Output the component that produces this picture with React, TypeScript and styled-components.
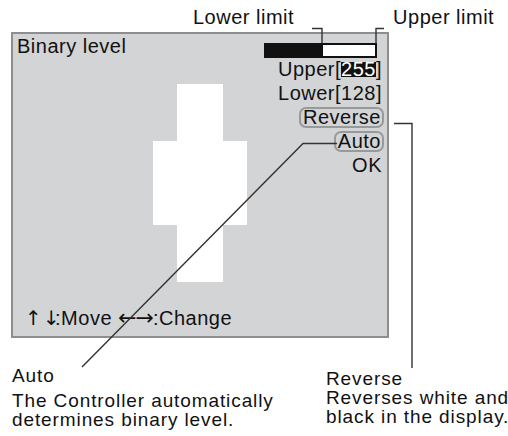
import React from 'react';
import styled, { createGlobalStyle } from 'styled-components';

const GlobalStyle = createGlobalStyle`
  html, body {
    margin: 0;
    padding: 0;
    background: #ffffff;
  }
`;

const Page = styled.div`
  position: relative;
  width: 508px;
  height: 436px;
  overflow: hidden;
  background: #ffffff;
  color: #111111;
  font-family: 'Liberation Sans', Arial, sans-serif;
  font-size: 20px;
  letter-spacing: 0.5px;
`;

const TopRow = styled.div`
  display: flex;
  height: 32px;
  box-sizing: border-box;
  padding: 6px 0 0 193px;
  gap: 99px;
  line-height: 23px;
  white-space: nowrap;
`;

const Label = styled.span`
  display: block;
`;

const Screen = styled.div`
  margin-left: 11px;
  width: 378px;
  height: 306px;
  box-sizing: border-box;
  border: 2px solid #8d8e90;
  background: #d3d4d6;
  display: flex;
  flex-direction: column;
  padding: 0 5px 6px 4px;
`;

const TitleRow = styled.div`
  display: flex;
  justify-content: space-between;
  align-items: flex-start;
  height: 23px;
`;

const Title = styled.div`
  line-height: 23px;
  padding-top: 1px;
`;

const LevelBar = styled.div`
  display: flex;
  width: 113px;
  height: 15px;
  margin: 9px 5px 0 0;
`;

const BarFill = styled.div`
  width: 58px;
  background: #111111;
`;

const BarRest = styled.div`
  flex: 1;
  box-sizing: border-box;
  border: 2px solid #111111;
  border-left-width: 1px;
  background: #ffffff;
`;

const Body = styled.div`
  flex: 1;
  display: grid;
  grid-template-columns: 1fr 94px 1fr;
`;

const Shape = styled.div`
  grid-column: 2;
  margin-top: 27px;
  display: flex;
  flex-direction: column;
  align-items: center;
  align-self: start;
`;

const Block = styled.div<{ $w: number; $h: number }>`
  width: ${p => p.$w}px;
  height: ${p => p.$h}px;
  background: #ffffff;
`;

const Menu = styled.div`
  grid-column: 3;
  display: flex;
  flex-direction: column;
  align-items: flex-end;
`;

const MenuItem = styled.div`
  line-height: 24px;
  white-space: nowrap;
`;

const Selected = styled.span`
  display: inline-block;
  line-height: 15px;
  background: #111111;
  color: #ffffff;
`;

const Boxed = styled.span`
  display: inline-block;
  line-height: 17px;
  padding: 0 1px 0 2px;
  margin-right: -2px;
  border: 2px solid #98999b;
  border-radius: 7px;
`;

const Footer = styled.div`
  line-height: 23px;
  padding-left: 8px;
  white-space: nowrap;
`;

const ArrowV = styled.span`
  display: inline-block;
  width: 12px;
  text-align: center;
  font-family: 'DejaVu Sans', sans-serif;
  font-size: 20px;
  letter-spacing: 0;
`;

const ArrowH = styled.span`
  font-family: 'DejaVu Sans', sans-serif;
  font-size: 22px;
  letter-spacing: -1px;
`;

const Captions = styled.div`
  display: flex;
  align-items: flex-start;
  font-size: 19px;
  letter-spacing: 0.9px;
`;

const Caption = styled.div<{ $left: number; $top: number; $width?: number }>`
  margin-left: ${p => p.$left}px;
  padding-top: ${p => p.$top}px;
  width: ${p => (p.$width ? `${p.$width}px` : 'auto')};
  flex-shrink: 0;
  line-height: 19px;
  white-space: nowrap;
`;

const CaptionText = styled.div<{ $gap?: number }>`
  margin-top: ${p => p.$gap ?? 0}px;
`;

const Leaders = styled.svg`
  position: absolute;
  left: 0;
  top: 0;
  pointer-events: none;
`;

export default function App() {
  return (
    <>
      <GlobalStyle />
      <Page>
        <TopRow>
          <Label>Lower limit</Label>
          <Label>Upper limit</Label>
        </TopRow>

        <Screen>
          <TitleRow>
            <Title>Binary level</Title>
            <LevelBar>
              <BarFill />
              <BarRest />
            </LevelBar>
          </TitleRow>

          <Body>
            <Shape>
              <Block $w={46} $h={57} />
              <Block $w={94} $h={84} />
              <Block $w={46} $h={57} />
            </Shape>
            <Menu>
              <MenuItem>
                Upper[<Selected>255</Selected>]
              </MenuItem>
              <MenuItem>Lower[128]</MenuItem>
              <MenuItem>
                <Boxed>Reverse</Boxed>
              </MenuItem>
              <MenuItem>
                <Boxed>Auto</Boxed>
              </MenuItem>
              <MenuItem>OK</MenuItem>
            </Menu>
          </Body>

          <Footer>
            <ArrowV>↑</ArrowV> <ArrowV>↓</ArrowV>:Move <ArrowH>←→</ArrowH>:Change
          </Footer>
        </Screen>

        <Captions>
          <Caption $left={12} $top={28} $width={314}>
            <CaptionText>Auto</CaptionText>
            <CaptionText $gap={6}>The Controller automatically</CaptionText>
            <CaptionText>determines binary level.</CaptionText>
          </Caption>
          <Caption $left={0} $top={31}>
            <CaptionText>Reverse</CaptionText>
            <CaptionText>Reverses white and</CaptionText>
            <CaptionText>black in the display.</CaptionText>
          </Caption>
        </Captions>

        <Leaders width={508} height={436} viewBox="0 0 508 436">
          <g fill="none" stroke="#333333" strokeWidth={1.4}>
            <path d="M312 28.5 H322 V43" />
            <path d="M384 28.5 H376 V43" />
            <path d="M394 123.5 H412 V368" />
            <path d="M337 143.5 H303 L82 367" />
          </g>
        </Leaders>
      </Page>
    </>
  );
}
